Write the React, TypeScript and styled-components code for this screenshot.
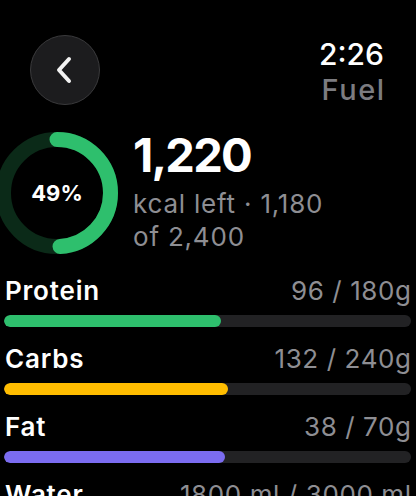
import { createGlobalStyle } from 'styled-components';
import styled from 'styled-components';

const GlobalStyle = createGlobalStyle`
    html, body {
        margin: 0;
        padding: 0;
        background: #000;
        overflow: hidden;
    }
    body {
        font-family: Inter, "Noto Sans", sans-serif;
        color: #fff;
    }
`

const macros = [
    { name: 'Protein', value: '96 / 180g', pct: 96 / 180, color: '#2ebf6d' },
    { name: 'Carbs', value: '132 / 240g', pct: 132 / 240, color: '#ffbd00' },
    { name: 'Fat', value: '38 / 70g', pct: 38 / 70, color: '#7b6cf0' },
    { name: 'Water', value: '1800 ml / 3000 ml', pct: 0.6, color: '#3aa0ff' },
]

const Screen = styled.div`
    width: 416px;
    height: 496px;
    overflow: hidden;
    background: #000;
`

const Header = styled.div`
    display: flex;
    justify-content: space-between;
    align-items: flex-start;
    padding: 35px 32px 0 30px;
`

const BackButton = styled.button`
    width: 70px;
    height: 70px;
    border-radius: 50%;
    background: #1c1c1e;
    border: 1.5px solid #3a3a3c;
    display: flex;
    align-items: center;
    justify-content: center;
    padding: 0;
    cursor: pointer;
`

const TitleBlock = styled.div`
    display: flex;
    flex-direction: column;
    align-items: flex-end;
    margin-top: 1px;
`

const Time = styled.span`
    font-size: 30px;
    font-weight: 500;
    line-height: 36px;
`

const Title = styled.span`
    font-size: 29px;
    font-weight: 500;
    line-height: 36px;
    letter-spacing: 1.5px;
    margin-right: -1.5px;
    color: #7c7c80;
`

const Hero = styled.div`
    display: flex;
    align-items: flex-start;
    gap: 15px;
    margin-top: 24px;
    margin-left: -4px;
`

const RingWrap = styled.div`
    position: relative;
    width: 122px;
    height: 122px;
    flex-shrink: 0;
`

const RingLabel = styled.div`
    position: absolute;
    inset: 0;
    display: flex;
    align-items: center;
    justify-content: center;
    font-size: 22px;
    font-weight: 700;
`

const Summary = styled.div`
    display: flex;
    flex-direction: column;
`

const BigNumber = styled.div`
    font-size: 47px;
    font-weight: 700;
    line-height: 56px;
    letter-spacing: -1.8px;
    margin-top: -5px;
`

const SubText = styled.div`
    font-size: 26px;
    line-height: 33px;
    letter-spacing: 0.8px;
    color: #8e8e93;
    margin-top: 4px;
`

const MacroList = styled.div`
    display: flex;
    flex-direction: column;
    gap: 17px;
    padding: 0 5px 0 4px;
    margin-top: 22px;
`

const MacroRow = styled.div`
    display: flex;
    flex-direction: column;
    gap: 9px;
`

const MacroHead = styled.div`
    display: flex;
    justify-content: space-between;
    align-items: baseline;
    padding-left: 1px;
`

const MacroName = styled.span`
    font-size: 26px;
    font-weight: 600;
    line-height: 30px;
    letter-spacing: 0.8px;
`

const MacroValue = styled.span`
    font-size: 26px;
    line-height: 30px;
    letter-spacing: 0.6px;
    margin-right: -0.6px;
    color: #8e8e93;
`

const Track = styled.div`
    height: 12px;
    border-radius: 6px;
    background: #222224;
    overflow: hidden;
`

const Fill = styled.div<{ $color: string }>`
    height: 100%;
    border-radius: 6px;
    background: ${p => p.$color};
`

function Ring({ pct }: { pct: number }) {
    const r = 53.5
    const c = 2 * Math.PI * r
    return <RingWrap>
        <svg width="122" height="122" viewBox="0 0 122 122">
            <circle cx="61" cy="61" r={r} fill="none" stroke="#0b2a18" strokeWidth="15" />
            <circle
                cx="61" cy="61" r={r} fill="none"
                stroke="#2ebf6d" strokeWidth="15" strokeLinecap="round"
                strokeDasharray={`${c * pct} ${c}`}
                transform="rotate(-90 61 61)"
            />
        </svg>
        <RingLabel>{Math.round(pct * 100)}%</RingLabel>
    </RingWrap>
}

export default function App() {
    return <Screen>
        <GlobalStyle />
        <Header>
            <BackButton aria-label="Back">
                <svg width="22" height="30" viewBox="0 0 22 30">
                    <path d="M15 4 L5 15 L15 26" fill="none" stroke="#f2f2f2" strokeWidth="4" strokeLinecap="round" strokeLinejoin="round" />
                </svg>
            </BackButton>
            <TitleBlock>
                <Time>2:26</Time>
                <Title>Fuel</Title>
            </TitleBlock>
        </Header>
        <Hero>
            <Ring pct={0.49} />
            <Summary>
                <BigNumber>1,220</BigNumber>
                <SubText>kcal left · 1,180<br />of 2,400</SubText>
            </Summary>
        </Hero>
        <MacroList>
            {macros.map(m => <MacroRow key={m.name}>
                <MacroHead>
                    <MacroName>{m.name}</MacroName>
                    <MacroValue>{m.value}</MacroValue>
                </MacroHead>
                <Track>
                    <Fill $color={m.color} style={{ width: `${m.pct * 100}%` }} />
                </Track>
            </MacroRow>)}
        </MacroList>
    </Screen>
}
